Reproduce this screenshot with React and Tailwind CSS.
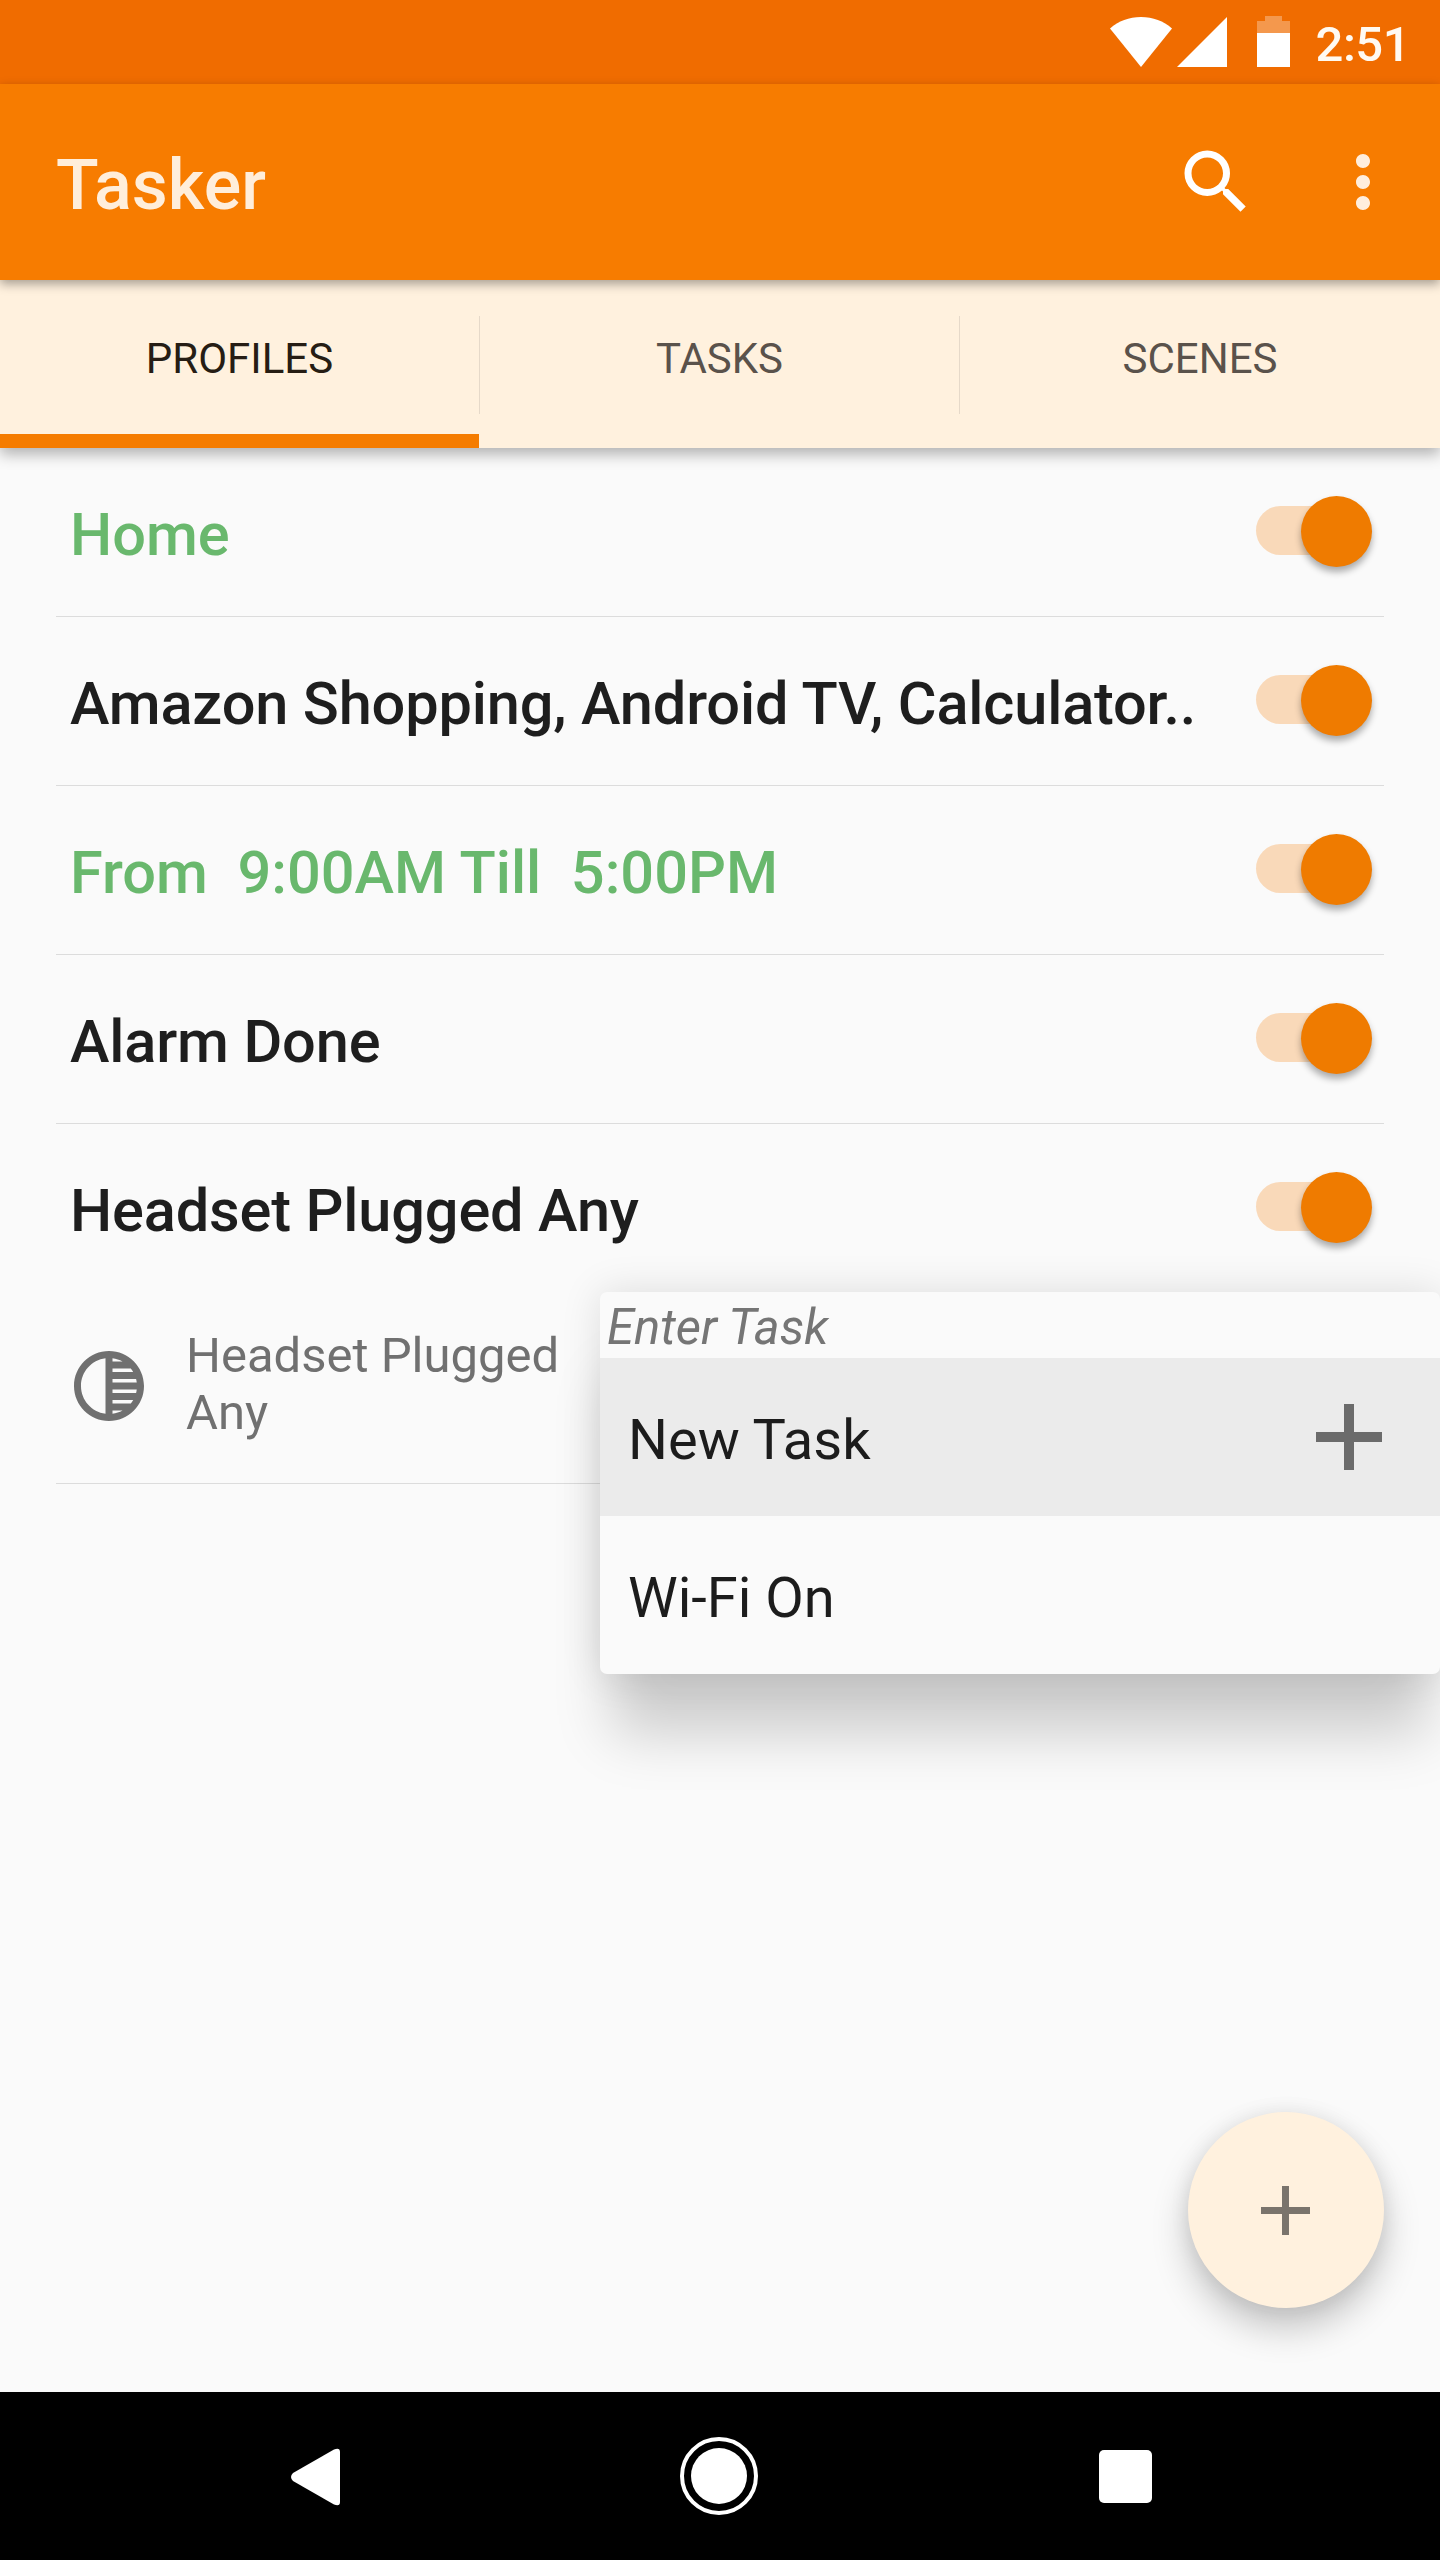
import { MdSearch, MdMoreVert, MdTonality } from 'react-icons/md';

const tabs = ['PROFILES', 'TASKS', 'SCENES'];

const profiles = [
  { name: 'Home', active: true },
  { name: 'Amazon Shopping, Android TV, Calculator..' },
  { name: 'From  9:00AM Till  5:00PM', active: true },
  { name: 'Alarm Done' },
  { name: 'Headset Plugged Any', context: 'Headset Plugged Any' },
];

function Plus({ className, stroke }) {
  return (
    <svg viewBox="0 0 66 66" className={className} stroke="currentColor" strokeWidth={stroke}>
      <path d="M33 0V66M0 33H66" />
    </svg>
  );
}

function StatusBar() {
  return (
    <div className="flex h-[84px] items-start justify-end bg-[#f06c00] pr-[30px] pt-4 text-white">
      <svg viewBox="0 0 62 50" className="mt-px h-[50px] w-[62px]" fill="currentColor">
        <path d="M0 11.5C8.500 4 19 0 31 0s22.500 4 31 11.500L31 50z" />
      </svg>
      <svg viewBox="0 0 50 50" className="ml-[5px] mt-px h-[50px] w-[50px]" fill="currentColor">
        <path d="M0 50L50 0V50z" />
      </svg>
      <svg viewBox="0 0 33 51" className="ml-[30px] h-[51px] w-[33px]" fill="currentColor">
        <path d="M8 0H25V5H33V17H0V5H8z" opacity="0.3" />
        <path d="M0 17H33V51H0z" />
      </svg>
      <span className="ml-[26px] text-[49px] font-medium leading-[58px] tracking-[-0.5px] text-[#fffaf2]">2:51</span>
    </div>
  );
}

function Toolbar() {
  return (
    <header className="relative z-20 flex h-[196px] items-center bg-[#f77c00] pl-14 shadow-[0_4px_10px_rgba(0,0,0,0.35)]">
      <h1 className="flex-1 pt-[7px] text-[70px] font-medium text-[#ffeedb]">Tasker</h1>
      <MdSearch className="mr-[63px] size-[84px] text-white" />
      <MdMoreVert className="mr-[35px] size-[84px] text-[#ffeedd]" />
    </header>
  );
}

function Tabs() {
  return (
    <nav className="relative z-10 grid h-[168px] grid-cols-3 bg-[#fff1de] shadow-[0_6px_14px_rgba(0,0,0,0.3)]">
      {tabs.map((tab, i) => (
        <div key={tab} className="flex flex-col">
          <div className="flex h-[154px] items-center">
            <span
              className={`flex-1 pt-0.5 text-center text-[42px] ${i === 0 ? 'text-[#261d14]' : 'text-[#5a524b]'}`}
            >
              {tab}
            </span>
            {i < tabs.length - 1 && <div className="mt-4 h-[98px] w-px bg-[#e6d9c9]" />}
          </div>
          {i === 0 && <div className="mr-px h-[14px] bg-[#f57c00]" />}
        </div>
      ))}
    </nav>
  );
}

function Switch() {
  return (
    <div className="relative mb-px mr-3 h-[71px] w-[116px]">
      <div className="mt-[10px] h-[49px] w-[100px] rounded-full bg-[#f9d9b9]" />
      <div className="absolute right-0 top-0 size-[71px] rounded-full bg-[#ef7b00] shadow-[0_5px_7px_rgba(0,0,0,0.32)]" />
    </div>
  );
}

function Profile({ profile }) {
  return (
    <li className="border-b border-[#dcdcdc]">
      <div className="flex h-[168px] items-center justify-between pl-3.5">
        <span
          className={`whitespace-pre pt-2 text-[59.5px] font-medium ${profile.active ? 'text-[#69b86d]' : 'tracking-[-0.16px] text-[#1e1e1e]'}`}
        >
          {profile.name}
        </span>
        <Switch />
      </div>
      {profile.context && (
        <div className="flex h-[191px] items-start pl-[11px] text-[#707070]">
          <MdTonality className="mt-[52px] size-[84px]" />
          <p className="ml-[35px] mt-[35px] w-[400px] text-[49px] leading-[57px]">{profile.context}</p>
        </div>
      )}
    </li>
  );
}

function TaskMenu() {
  return (
    <div className="absolute right-0 top-[1292px] z-30 w-[840px] rounded-[7px] bg-[#fafafa] shadow-[0_0_40px_rgba(0,0,0,0.12),0_72px_54px_-12px_rgba(0,0,0,0.18)]">
      <div className="flex h-[66px] items-center pl-[7px] pt-1 text-[49px] italic leading-none text-[#757575]">
        Enter Task
      </div>
      <div className="flex h-[158px] items-center justify-between bg-[#ebebeb] pl-[28px] pr-[58px] text-[56px] text-[#1c1c1c]">
        <span className="pt-1.5">New Task</span>
        <Plus className="size-[66px] text-[#6b6b6b]" stroke={10} />
      </div>
      <div className="flex h-[158px] items-center pl-[28px] text-[56px] text-[#1c1c1c]">
        <span className="pt-1.5">Wi-Fi On</span>
      </div>
    </div>
  );
}

function NavBar() {
  return (
    <footer className="flex h-[168px] items-center bg-black pl-[291px] pr-[288px] text-white">
      <svg viewBox="0 0 49 58" className="mt-0.5 h-[58px] w-[49px]" fill="currentColor">
        <path d="M2 25L43 1.500Q49 -1 49 4V54Q49 59 43 56.500L2 33Q-2 29 2 25z" />
      </svg>
      <svg viewBox="0 0 78 78" className="ml-[340px] size-[78px]">
        <circle cx="39" cy="39" r="37" fill="none" stroke="currentColor" strokeWidth="4" />
        <circle cx="39" cy="39" r="28" fill="currentColor" />
      </svg>
      <div className="ml-[341px] mt-px size-[53px] rounded-[5px] bg-white" />
    </footer>
  );
}

export default function App() {
  return (
    <div className="relative flex h-[2560px] w-[1440px] flex-col overflow-hidden bg-[#fafafa] font-['Roboto',sans-serif]">
      <StatusBar />
      <Toolbar />
      <Tabs />
      <main className="flex-1 px-14">
        <ul>
          {profiles.map(profile => (
            <Profile key={profile.name} profile={profile} />
          ))}
        </ul>
      </main>
      <NavBar />
      <TaskMenu />
      <button className="absolute right-14 top-[2112px] flex size-[196px] items-center justify-center rounded-full bg-[#fff1de] pr-px text-[#7a746c] shadow-[0_0_20px_rgba(0,0,0,0.08),0_20px_36px_rgba(0,0,0,0.22)]">
        <Plus className="size-[49px]" stroke={9.4} />
      </button>
    </div>
  );
}
